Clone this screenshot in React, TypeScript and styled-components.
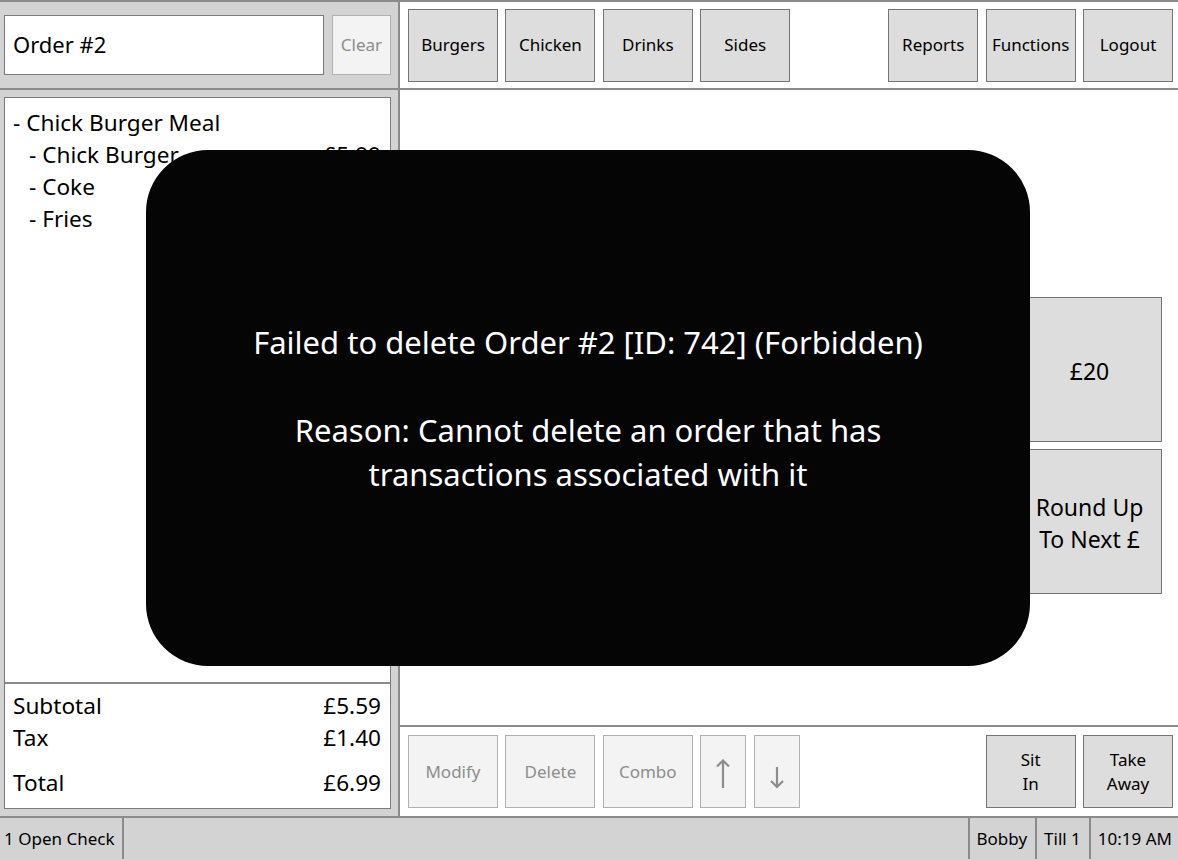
import React from "react";
import styled, { createGlobalStyle } from "styled-components";

const GlobalStyle = createGlobalStyle`
  html, body {
    margin: 0;
    padding: 0;
    background: #ffffff;
  }
  body {
    font-family: "Noto Sans", "Open Sans", sans-serif;
    color: #000000;
  }
`;

const Screen = styled.div`
  position: relative;
  width: 1178px;
  height: 859px;
  display: grid;
  grid-template-rows: 1fr 43px;
  border-top: 2px solid #8a8a8a;
  box-sizing: border-box;
  overflow: hidden;
`;

const Main = styled.div`
  display: grid;
  grid-template-columns: 400px 1fr;
  min-height: 0;
`;

const LeftPanel = styled.div`
  display: flex;
  flex-direction: column;
  background: #d3d3d3;
  border-right: 2px solid #8a8a8a;
  min-height: 0;
`;

const OrderHeader = styled.div`
  height: 86px;
  display: flex;
  align-items: center;
  gap: 8px;
  padding: 0 7px 0 4px;
  border-bottom: 2px solid #8a8a8a;
  flex-shrink: 0;
`;

const OrderName = styled.div`
  flex: 1;
  height: 60px;
  box-sizing: border-box;
  background: #ffffff;
  border: 1px solid #7a7a7a;
  display: flex;
  align-items: center;
  padding: 0 0 2px 8px;
  font-size: 22px;
`;

const Button = styled.button<{ $disabled?: boolean; $w?: number; $h?: number; $size?: number }>`
  width: ${(p) => p.$w ?? 90}px;
  height: ${(p) => p.$h ?? 73}px;
  box-sizing: border-box;
  flex-shrink: 0;
  display: flex;
  flex-direction: column;
  align-items: center;
  justify-content: center;
  padding: 0;
  margin: 0;
  font-family: inherit;
  font-size: ${(p) => p.$size ?? 17}px;
  line-height: 1.4;
  text-align: center;
  background: ${(p) => (p.$disabled ? "#f3f3f3" : "#dddddd")};
  color: ${(p) => (p.$disabled ? "#8d8d8d" : "#000000")};
  border: 1px solid ${(p) => (p.$disabled ? "#b0b0b0" : "#747474")};
  border-radius: 0;
`;

const OrderBody = styled.div`
  flex: 1;
  min-height: 0;
  padding: 7px 7px 7px 4px;
  display: flex;
`;

const OrderBox = styled.div`
  flex: 1;
  display: flex;
  flex-direction: column;
  background: #ffffff;
  border: 1px solid #7a7a7a;
`;

const ItemList = styled.div`
  flex: 1;
  padding: 9px 9px 0 8px;
  font-size: 22.6px;
  line-height: 32px;
`;

const ItemRow = styled.div<{ $indent?: boolean }>`
  display: flex;
  justify-content: space-between;
  padding-left: ${(p) => (p.$indent ? 16 : 0)}px;
`;

const Totals = styled.div`
  border-top: 2px solid #8a8a8a;
  padding: 6px 9px 9px 8px;
  font-size: 22.6px;
  line-height: 32px;
`;

const TotalRow = styled.div<{ $gap?: number }>`
  display: flex;
  justify-content: space-between;
  margin-top: ${(p) => p.$gap ?? 0}px;
`;

const RightPanel = styled.div`
  display: flex;
  flex-direction: column;
  background: #ffffff;
  min-height: 0;
`;

const ToolBar = styled.div<{ $top?: boolean }>`
  height: ${(p) => (p.$top ? 86 : 89)}px;
  flex-shrink: 0;
  display: flex;
  align-items: center;
  justify-content: space-between;
  padding: 0 5px 0 8px;
  ${(p) => (p.$top ? "border-bottom: 2px solid #8a8a8a;" : "border-top: 2px solid #8a8a8a;")}
`;

const ButtonGroup = styled.div`
  display: flex;
  gap: 7.4px;
`;

const Content = styled.div`
  flex: 1;
  display: flex;
  justify-content: flex-end;
  align-items: flex-start;
  padding: 207px 16px 0 0;
`;

const PayGrid = styled.div`
  display: grid;
  grid-template-columns: repeat(2, 145px);
  grid-auto-rows: 145px;
  gap: 7px;
`;

const PayButton = styled(Button)`
  width: 145px;
  height: 145px;
  font-size: 23px;
  line-height: 32px;
  padding-top: 3px;
`;

const ArrowIcon = styled.svg<{ $offset?: number }>`
  display: block;
  stroke: #8d8d8d;
  fill: none;
  stroke-width: 2.2;
  margin-top: ${(p) => p.$offset ?? 0}px;
`;

const StatusBar = styled.div`
  display: flex;
  background: #d3d3d3;
  border-top: 2px solid #8a8a8a;
  font-size: 17px;
`;

const StatusCell = styled.div<{ $grow?: boolean }>`
  display: flex;
  align-items: center;
  padding: 0 8px 0 7px;
  ${(p) => (p.$grow ? "flex: 1;" : "")}
  border-right: 2px solid #8a8a8a;
  &:first-child {
    padding-left: 4px;
  }
  &:last-child {
    border-right: none;
    padding-right: 6px;
  }
`;

const Overlay = styled.div`
  position: absolute;
  left: 146px;
  top: 148px;
  width: 884px;
  height: 516px;
  background: #050505;
  border-radius: 62px;
  display: flex;
  flex-direction: column;
  align-items: center;
  justify-content: center;
  color: #ffffff;
  font-size: 31px;
  line-height: 44px;
  text-align: center;
`;

const OverlayText = styled.p<{ $gap?: number }>`
  margin: ${(p) => p.$gap ?? 0}px 0 0;
`;

const UpArrow = () => (
  <ArrowIcon width="14" height="29" viewBox="0 0 14 29" $offset={4}>
    <path d="M7 1.5 V29 M1 7.5 L7 1.5 L13 7.5" />
  </ArrowIcon>
);

const DownArrow = () => (
  <ArrowIcon width="14" height="22" viewBox="0 0 14 22" $offset={12}>
    <path d="M7 0 V20 M1 14 L7 20 L13 14" />
  </ArrowIcon>
);

const items = [
  { name: "- Chick Burger Meal", price: "", indent: false },
  { name: "- Chick Burger", price: "£5.99", indent: true },
  { name: "- Coke", price: "", indent: true },
  { name: "- Fries", price: "", indent: true },
];

export default function App() {
  return (
    <>
      <GlobalStyle />
      <Screen>
        <Main>
          <LeftPanel>
            <OrderHeader>
              <OrderName>Order #2</OrderName>
              <Button $disabled $w={59} $h={60} $size={17}>
                Clear
              </Button>
            </OrderHeader>
            <OrderBody>
              <OrderBox>
                <ItemList>
                  {items.map((it) => (
                    <ItemRow key={it.name} $indent={it.indent}>
                      <span>{it.name}</span>
                      <span>{it.price}</span>
                    </ItemRow>
                  ))}
                </ItemList>
                <Totals>
                  <TotalRow>
                    <span>Subtotal</span>
                    <span>£5.59</span>
                  </TotalRow>
                  <TotalRow>
                    <span>Tax</span>
                    <span>£1.40</span>
                  </TotalRow>
                  <TotalRow $gap={13}>
                    <span>Total</span>
                    <span>£6.99</span>
                  </TotalRow>
                </Totals>
              </OrderBox>
            </OrderBody>
          </LeftPanel>

          <RightPanel>
            <ToolBar $top>
              <ButtonGroup>
                <Button>Burgers</Button>
                <Button>Chicken</Button>
                <Button>Drinks</Button>
                <Button>Sides</Button>
              </ButtonGroup>
              <ButtonGroup>
                <Button>Reports</Button>
                <Button>Functions</Button>
                <Button>Logout</Button>
              </ButtonGroup>
            </ToolBar>
            <Content>
              <PayGrid>
                <PayButton>£10</PayButton>
                <PayButton>£20</PayButton>
                <PayButton>Exact</PayButton>
                <PayButton>
                  <span>Round Up</span>
                  <span>To Next £</span>
                </PayButton>
              </PayGrid>
            </Content>
            <ToolBar>
              <ButtonGroup>
                <Button $disabled>Modify</Button>
                <Button $disabled>Delete</Button>
                <Button $disabled>Combo</Button>
                <Button $disabled $w={46}>
                  <UpArrow />
                </Button>
                <Button $disabled $w={46}>
                  <DownArrow />
                </Button>
              </ButtonGroup>
              <ButtonGroup>
                <Button>
                  <span>Sit</span>
                  <span>In</span>
                </Button>
                <Button>
                  <span>Take</span>
                  <span>Away</span>
                </Button>
              </ButtonGroup>
            </ToolBar>
          </RightPanel>
        </Main>

        <StatusBar>
          <StatusCell>1 Open Check</StatusCell>
          <StatusCell $grow />
          <StatusCell>Bobby</StatusCell>
          <StatusCell>Till 1</StatusCell>
          <StatusCell>10:19 AM</StatusCell>
        </StatusBar>

        <Overlay>
          <OverlayText>Failed to delete Order #2 [ID: 742] (Forbidden)</OverlayText>
          <OverlayText $gap={44}>
            Reason: Cannot delete an order that has
            <br />
            transactions associated with it
          </OverlayText>
        </Overlay>
      </Screen>
    </>
  );
}
